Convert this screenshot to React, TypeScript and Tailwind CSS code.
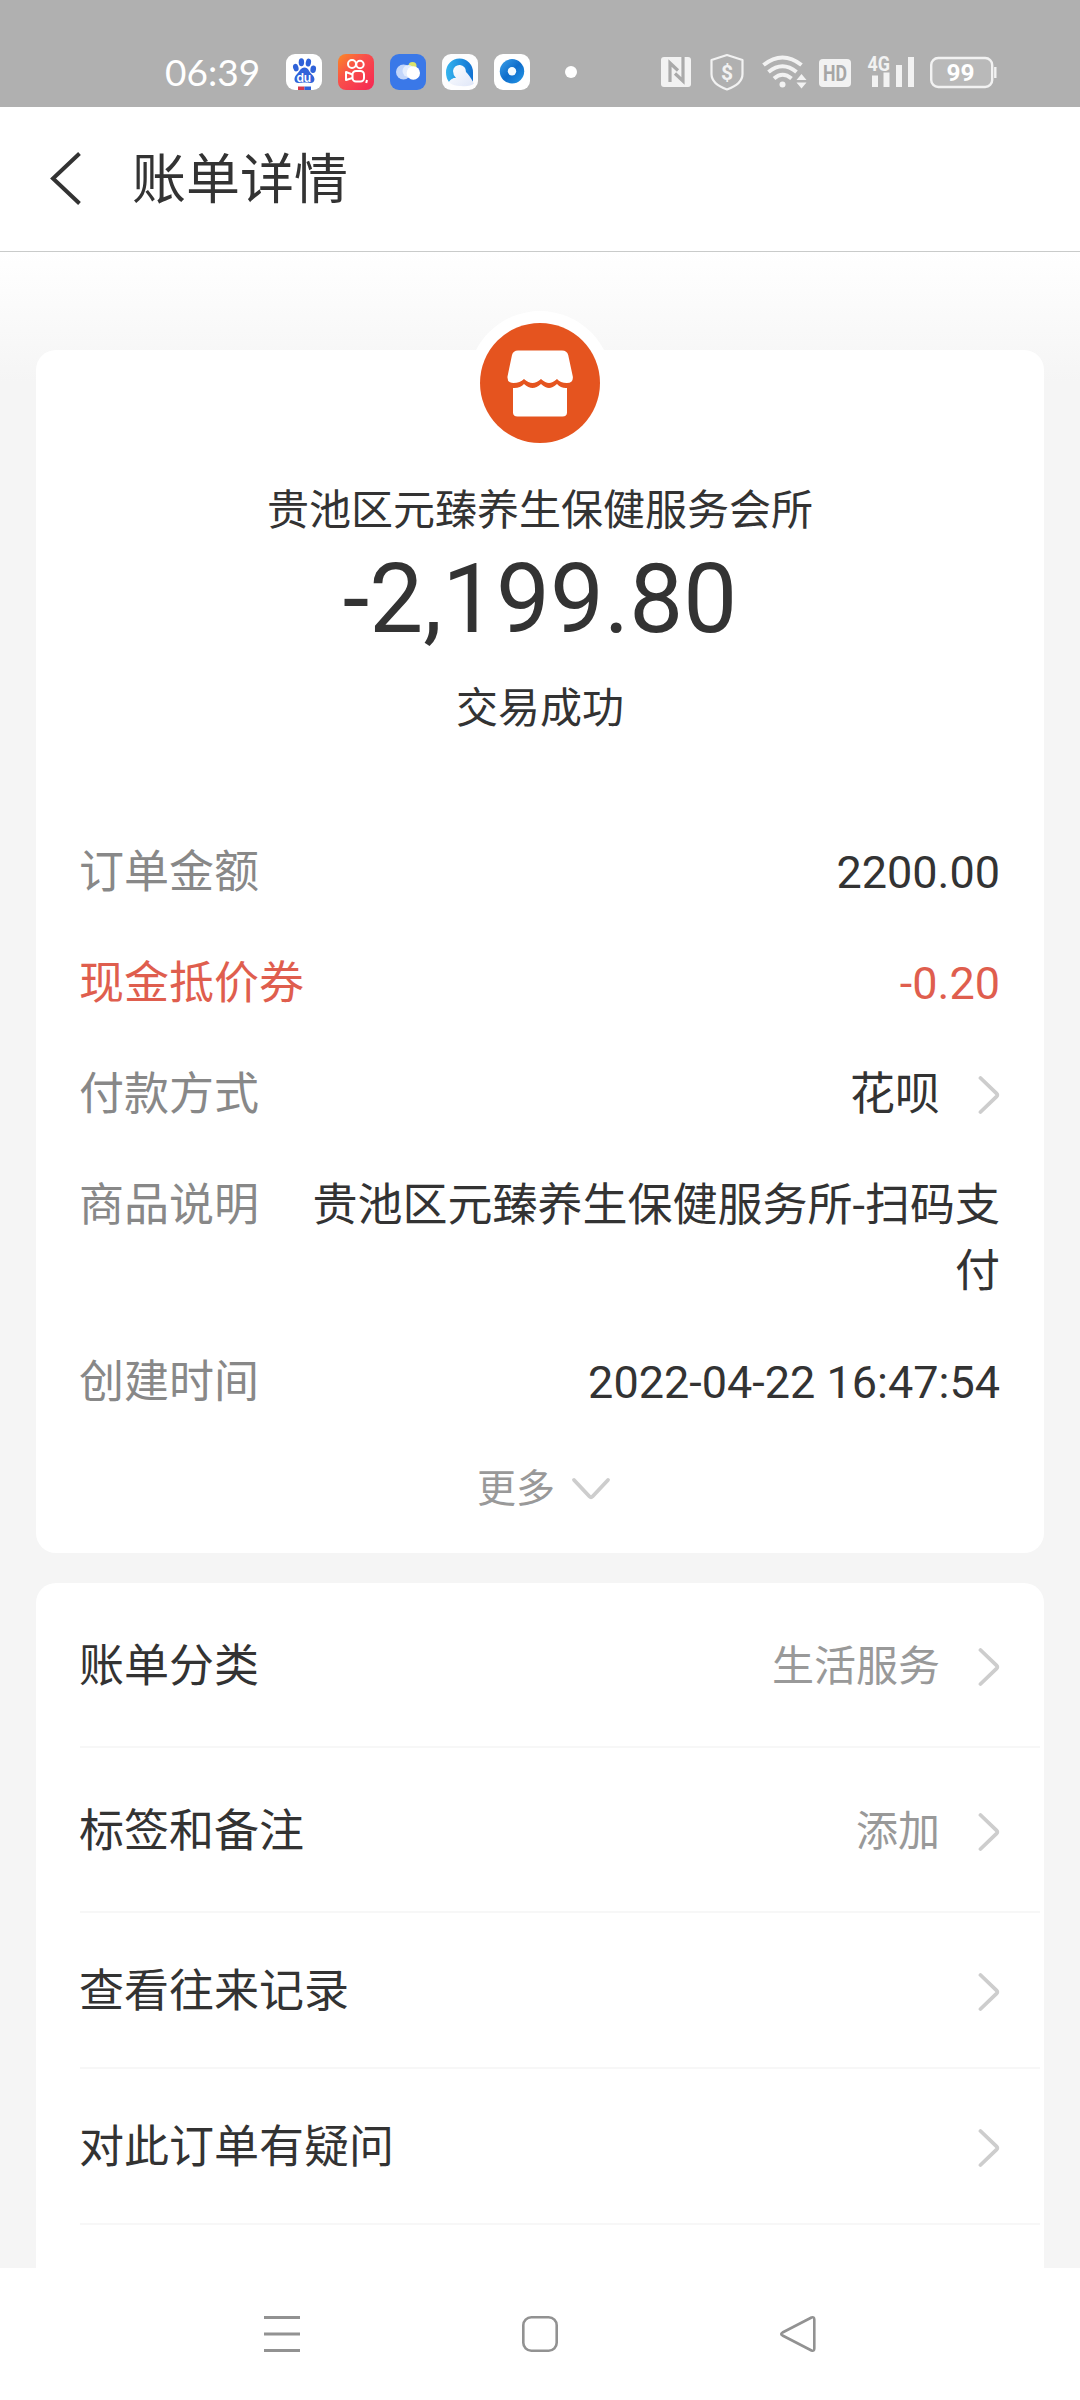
import type { ReactNode } from 'react'

function Chevron() {
    return (
        <svg className="ml-9 h-10 w-6 shrink-0" viewBox="0 0 24 40" fill="none" stroke="#cdcdcd" strokeWidth={3.8} strokeLinecap="round" strokeLinejoin="round">
            <path d="M4.500 3 20.500 18.400Q22 20 20.500 21.600L4.500 37" />
        </svg>
    )
}

function AppIcons() {
    return (
        <div className="flex gap-4">
            <svg className="size-9" viewBox="0 0 36 36">
                <rect width="36" height="36" rx="9" fill="#fff" />
                <g fill="#2f62d9">
                    <ellipse cx="9.800" cy="13.600" rx="2.700" ry="3.800" transform="rotate(-15 9.800 13.600)" />
                    <ellipse cx="15.400" cy="8.200" rx="2.700" ry="4" />
                    <ellipse cx="22.400" cy="8.600" rx="2.600" ry="4" transform="rotate(12 22.400 8.600)" />
                    <ellipse cx="27.200" cy="15.200" rx="2.800" ry="3.800" transform="rotate(10 27.200 15.200)" />
                    <path d="M18.500 13.500c4 0 4.600 4.500 7.200 6.800 4.500 4 3 8.700-1 8.700-2.500 0-4-.4-6.200-.4s-3.800.4-6 .4c-4.500 0-5.500-5.200-1.500-9 2.600-2.400 3.500-6.500 7.500-6.500z" />
                </g>
                <text x="17.800" y="27.500" fontSize="12" textAnchor="middle" fill="#fff" className="font-['Inter',sans-serif] font-semibold">du</text>
                <path d="M12 32.500h6.500V36H12z" fill="#d9384a" />
                <path d="M18.500 32.500H25V36h-6.500z" fill="#2f62d9" />
            </svg>
            <svg className="size-9" viewBox="0 0 36 36" fill="none">
                <defs>
                    <linearGradient id="video" x1="0" y1="0" x2="1" y2="1">
                        <stop offset="0" stopColor="#fb8a24" />
                        <stop offset=".4" stopColor="#f9504a" />
                        <stop offset="1" stopColor="#f52554" />
                    </linearGradient>
                </defs>
                <rect width="36" height="36" rx="8" fill="url(#video)" />
                <g stroke="#fff" strokeWidth="2" strokeLinejoin="round">
                    <circle cx="14" cy="10" r="4" />
                    <circle cx="22" cy="10.500" r="3.700" />
                    <rect x="14.500" y="17" width="11.500" height="10.500" rx="3.500" />
                    <path d="M14.500 20.500 8 18v8l6.500-2" />
                    <path d="m29 26-.8 3" />
                </g>
            </svg>
            <svg className="size-9" viewBox="0 0 36 36">
                <rect width="36" height="36" rx="9" fill="#3a78e8" />
                <circle cx="22.500" cy="12" r="4" fill="#dbe36b" />
                <circle cx="13.500" cy="18" r="7.500" fill="#c3d6fa" />
                <circle cx="18.500" cy="17" r="6" fill="#e4edfd" />
                <circle cx="23.300" cy="19" r="6.700" fill="#fff" />
            </svg>
            <svg className="size-9" viewBox="0 0 36 36">
                <defs>
                    <linearGradient id="browser" x1="0" y1="0" x2="1" y2="0">
                        <stop offset="0" stopColor="#35b4ee" />
                        <stop offset="1" stopColor="#1272d2" />
                    </linearGradient>
                    <linearGradient id="cloud" x1="0" y1="0" x2="1" y2="1">
                        <stop offset="0" stopColor="#fff" />
                        <stop offset="1" stopColor="#dfe6f8" />
                    </linearGradient>
                </defs>
                <rect width="36" height="36" rx="9" fill="#fdfdfe" />
                <path d="M4 18.500a13.500 14 0 0 1 27 0V28L24 24H12l-5 4q-3-4-3-9.500z" fill="url(#browser)" />
                <path d="M11 17a6.500 6.500 0 0 1 13 1q3 2.500 8 11.500-4 3.500-13 2.500-9 0-12-4 2-4 7-4-3-3-3-7z" fill="url(#cloud)" />
            </svg>
            <svg className="size-9" viewBox="0 0 36 36">
                <defs>
                    <linearGradient id="ring" x1="0" y1="0" x2="1" y2="1">
                        <stop offset="0" stopColor="#3ba1ea" />
                        <stop offset=".5" stopColor="#0f6dcb" />
                        <stop offset="1" stopColor="#2499e8" />
                    </linearGradient>
                </defs>
                <rect width="36" height="36" rx="9" fill="#fff" />
                <circle cx="18" cy="17.300" r="12.200" fill="url(#ring)" />
                <circle cx="18" cy="17.300" r="4.200" fill="#f4fbff" />
            </svg>
        </div>
    )
}

function SystemIcons() {
    return (
        <svg className="h-10 w-[340px]" viewBox="660 52 340 40" fill="none">
            {/* NFC */}
            <rect x="661" y="57" width="30" height="30" rx="3" fill="#f2f2f2" />
            <path d="M670 82V63l8 7.500M675 73.500l8 7.500V57" stroke="#aaa" strokeWidth="3.200" />
            {/* payment shield */}
            <path d="m727 55 15.500 5v14q0 10-15.500 15.500Q711.500 84 711.500 74V60z" stroke="#f2f2f2" strokeWidth="2.200" strokeLinejoin="round" />
            <text x="727" y="79.500" fontSize="21" textAnchor="middle" fill="#f2f2f2" className="font-['Roboto',sans-serif] font-bold">$</text>
            {/* wifi */}
            <g stroke="#f2f2f2" strokeWidth="4">
                <path d="M763.500 65q19-15 38 0" />
                <path d="M768.500 72q14-11.500 28 0" />
                <path d="M774 78.500q8.500-7.500 17.500 0" />
            </g>
            <circle cx="782.500" cy="84.500" r="3" fill="#f2f2f2" />
            <path d="m801.500 74 5 6h-10zM801.500 88.500l5-6h-10z" fill="#f2f2f2" />
            {/* HD */}
            <rect x="819" y="59" width="32" height="28" rx="4" fill="#f2f2f2" />
            <text x="835" y="80.500" fontSize="22" textAnchor="middle" textLength="24" lengthAdjust="spacingAndGlyphs" fill="#a6a6a6" className="font-['Roboto',sans-serif] font-bold">HD</text>
            {/* signal */}
            <text x="867.500" y="70.500" fontSize="21" textLength="22.500" lengthAdjust="spacingAndGlyphs" fill="#f2f2f2" className="font-['Roboto',sans-serif] font-bold">4G</text>
            <path d="M872 75.500h6V87h-6zM883.500 72.500h6V87h-6zM896 65h6v22h-6zM908 57h6v30h-6z" fill="#f2f2f2" />
            {/* battery */}
            <rect x="931.200" y="58" width="61" height="29" rx="7" stroke="#f2f2f2" strokeWidth="2.400" fill="#b9b9b9" />
            <path d="M995.300 67v11" stroke="#f2f2f2" strokeWidth="2.400" />
            <text x="960.500" y="81" fontSize="24" textAnchor="middle" textLength="28" lengthAdjust="spacingAndGlyphs" fill="#fff" className="font-['Roboto',sans-serif] font-bold">99</text>
        </svg>
    )
}

function StatusBar() {
    return (
        <div className="flex h-[107px] shrink-0 items-center bg-[#b0b0b0] pt-[38px] pb-[1px] pl-[165px]">
            <span className="w-[121px] font-['Lato',sans-serif] text-[37px] leading-9 text-white">06:39</span>
            <AppIcons />
            <span className="ml-[35px] size-3 rounded-full bg-white" />
            <div className="ml-[83px]">
                <SystemIcons />
            </div>
        </div>
    )
}

function MerchantBadge() {
    return (
        <div className="-mt-[39px] rounded-full bg-white p-3">
            <svg className="size-[120px]" viewBox="0 0 120 120">
                <circle cx="60" cy="60" r="60" fill="#e5541f" />
                <path d="M38 27.500h44q5 0 6.200 4.500l4.600 21.500q.8 6.500-6 6.500-6.500 0-9.800-4-4.500 4-8 4t-8-4q-4.500 4-8.500 4t-8.500-4q-4 4-10.500 4t-6-6.500L32 32q1.200-4.500 6-4.500z" fill="#fff" />
                <path d="M33 65q7 .5 11-4 4.500 4 8.500 4t8.500-4q4.500 4 8 4t8-4q4 4.500 10 4v24.500q0 4-4.500 4h-45q-4.500 0-4.500-4z" fill="#fff" />
            </svg>
        </div>
    )
}

function DetailRow({ label, children, accent }: { label: string; children: ReactNode; accent?: boolean }) {
    return (
        <div className={`flex justify-between pb-[45px] text-[45px] leading-[66px] ${accent ? 'text-[#df5e4e]' : 'text-[#333]'}`}>
            <span className={`shrink-0 ${accent ? '' : 'text-[#888]'}`}>{label}</span>
            <div className="flex items-center pl-10 text-right">{children}</div>
        </div>
    )
}

const actions = [
    { label: '账单分类', value: '生活服务', height: 'h-[165px]' },
    { label: '标签和备注', value: '添加', height: 'h-[165px]' },
    { label: '查看往来记录', value: '', height: 'h-[156px]' },
    { label: '对此订单有疑问', value: '', height: 'h-[156px]' },
]

export default function App() {
    return (
        <div className="flex h-[2400px] w-[1080px] flex-col overflow-hidden bg-white font-['Roboto','Noto_Sans_CJK_SC',sans-serif] text-[#333]">
            <StatusBar />

            <header className="flex h-[145px] shrink-0 items-center border-b border-[#c9cbca] pl-12">
                <svg className="h-[54px] w-9" viewBox="0 0 36 54" fill="none" stroke="#333" strokeWidth={4}>
                    <path d="M31.500 1.500 5 26.500l26.500 25" />
                </svg>
                <h1 className="ml-12 pt-[3px] text-[54px] leading-[72px]">账单详情</h1>
            </header>

            <main className="flex min-h-0 flex-1 flex-col overflow-hidden bg-[#f5f5f5] bg-[linear-gradient(#fff,#f5f5f5_130px)] px-9 pt-[98px]">
                <section className="flex h-[1203px] shrink-0 flex-col rounded-[20px] bg-white">
                    <div className="flex flex-col items-center">
                        <MerchantBadge />
                        <p className="mt-6 text-[42px] leading-[64px]">贵池区元臻养生保健服务会所</p>
                        <p className="text-[96px] leading-[112px]">-2,199.80</p>
                        <p className="mt-[22px] text-[42px] leading-[64px]">交易成功</p>
                    </div>

                    <div className="mt-[99px] pr-11 pl-[43px]">
                        <DetailRow label="订单金额">2200.00</DetailRow>
                        <DetailRow label="现金抵价券" accent>-0.20</DetailRow>
                        <DetailRow label="付款方式">
                            花呗
                            <Chevron />
                        </DetailRow>
                        <DetailRow label="商品说明">贵池区元臻养生保健服务所-扫码支付</DetailRow>
                        <DetailRow label="创建时间">2022-04-22 16:47:54</DetailRow>
                    </div>

                    <button className="flex items-center justify-center pl-2 text-[39px] leading-[56px] text-[#999]">
                        更多
                        <svg className="ml-4 h-6 w-10" viewBox="0 0 40 24" fill="none" stroke="#cdcdcd" strokeWidth={3.8} strokeLinecap="round" strokeLinejoin="round">
                            <path d="M3 3 18.500 19.500Q20 21 21.500 19.500L37 3" />
                        </svg>
                    </button>
                </section>

                <section className="mt-[30px] h-[760px] shrink-0 rounded-[20px] bg-white pl-11">
                    {actions.map((item) => (
                        <div key={item.label} className={`mr-1 flex items-center border-b-2 border-[#f7f7f7] pt-1 pr-10 ${item.height}`}>
                            <span className="-ml-px flex-1 text-[45px] leading-[66px]">{item.label}</span>
                            <span className="text-[42px] leading-[64px] text-[#999]">{item.value}</span>
                            <Chevron />
                        </div>
                    ))}
                </section>
            </main>

            <nav className="flex h-[132px] shrink-0 items-center justify-center gap-[218px] bg-white">
                <svg className="size-10" viewBox="0 0 40 40" stroke="#929292" strokeWidth={3}>
                    <path d="M2 3.500h36M2 20h36M2 36.500h36" />
                </svg>
                <svg className="size-10" viewBox="0 0 40 40" fill="none" stroke="#929292" strokeWidth={2.6}>
                    <rect x="3.300" y="3.300" width="33.400" height="33.400" rx="8" />
                </svg>
                <svg className="size-10" viewBox="0 0 40 40" fill="none" stroke="#929292" strokeWidth={2.6} strokeLinejoin="round">
                    <path d="M33.500 3.500 4.500 18.500Q2 20 4.500 21.500l29 15q2.800 1 2.800-2v-29q0-3-2.800-2z" />
                </svg>
            </nav>
        </div>
    )
}
